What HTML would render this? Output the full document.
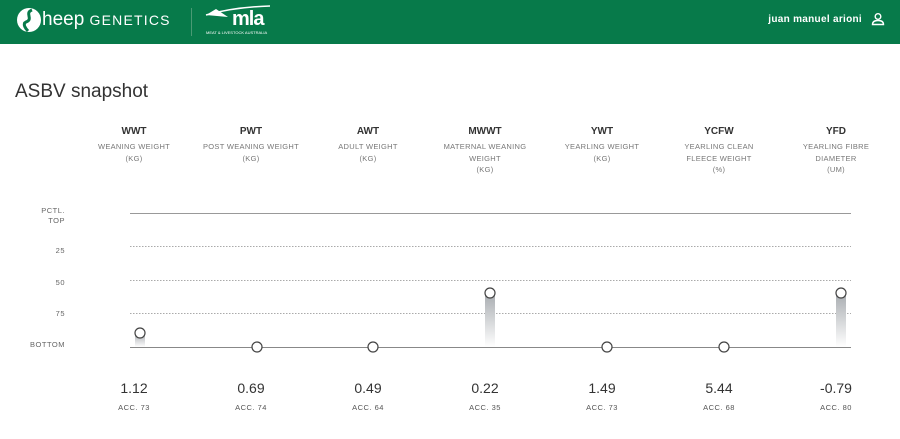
<!DOCTYPE html>
<html><head><style>
body{margin:0;width:900px;height:439px;background:#fff;font-family:"Liberation Sans",sans-serif;position:relative;overflow:hidden}
.hdr{position:absolute;left:0;top:0;width:900px;height:44px;background:#077a4a}
.t{position:absolute;text-align:center;width:116px;color:#333}
.ab{font-weight:bold;font-size:10px;top:126px}
.ds{font-size:7.5px;color:#777;top:141px;line-height:11.5px;letter-spacing:.3px}
.v{font-size:14px;top:380px;color:#333}
.a{font-size:7.5px;top:403px;color:#555;letter-spacing:.5px}
.y{position:absolute;right:835px;font-size:7.5px;color:#666;text-align:right;letter-spacing:.5px;line-height:10px}
</style></head><body>
<div class="hdr">
<svg width="30" height="30" style="position:absolute;left:14px;top:5px" viewBox="0 0 30 30"><circle cx="15" cy="15" r="12" fill="#fff"/><path d="M18 5 C10 8 20 14 12 17 C8 19 12 24 14 26" stroke="#077a4a" stroke-width="3" fill="none"/></svg>
<div style="position:absolute;left:42px;top:9px;color:#fff;font-size:19px;white-space:nowrap">heep <span style="font-size:14px;letter-spacing:1.2px">GENETICS</span></div>
<div style="position:absolute;left:191px;top:8px;width:1px;height:28px;background:#4a9a74"></div>
<svg width="70" height="32" style="position:absolute;left:204px;top:5px" viewBox="0 0 70 32"><path d="M2 10 L12 4 L24 12 Z" fill="#fff"/><path d="M2 10 Q30 2 66 1" stroke="#fff" stroke-width="1.5" fill="none"/></svg>
<div style="position:absolute;left:232px;top:8px;color:#fff;font-size:20px;font-weight:bold;letter-spacing:-1px">mla</div>
<div style="position:absolute;left:206px;top:30px;color:#fff;font-size:4px">MEAT &amp; LIVESTOCK AUSTRALIA</div>
<div style="position:absolute;right:38px;top:14px;color:#fff;font-size:10px;font-weight:bold;letter-spacing:.3px">juan manuel arioni</div>
<svg width="14" height="14" style="position:absolute;left:871px;top:12px" viewBox="0 0 14 14" fill="none" stroke="#fff" stroke-width="1.4"><circle cx="7" cy="4.5" r="2.8"/><path d="M1.5 12.5 Q1.5 8.5 7 8.5 Q12.5 8.5 12.5 12.5 Z"/></svg>
</div>
<div style="position:absolute;left:15px;top:81px;font-size:19px;color:#333">ASBV snapshot</div>

<div class="y" style="top:206px">PCTL.<br>TOP</div>
<div class="y" style="top:246px">25</div>
<div class="y" style="top:278px">50</div>
<div class="y" style="top:309px">75</div>
<div class="y" style="top:340px">BOTTOM</div>

<svg width="900" height="439" style="position:absolute;left:0;top:0">
<defs><linearGradient id="g" x1="0" y1="0" x2="0" y2="1"><stop offset="0" stop-color="#a8acb0"/><stop offset="1" stop-color="#fff"/></linearGradient></defs>
<line x1="130" y1="213.5" x2="851" y2="213.5" stroke="#999"/>
<line x1="130" y1="246.5" x2="851" y2="246.5" stroke="#aaa" stroke-dasharray="1.5 1.5"/>
<line x1="130" y1="280.5" x2="851" y2="280.5" stroke="#aaa" stroke-dasharray="1.5 1.5"/>
<line x1="130" y1="313.5" x2="851" y2="313.5" stroke="#aaa" stroke-dasharray="1.5 1.5"/>
<rect x="135" y="333" width="10" height="14" fill="url(#g)"/>
<rect x="485" y="293" width="10" height="54" fill="url(#g)"/>
<rect x="836" y="293" width="10" height="54" fill="url(#g)"/>
<line x1="130" y1="347.5" x2="851" y2="347.5" stroke="#888"/>
<g fill="#fff" stroke="#444" stroke-width="1.2">
<circle cx="140" cy="333" r="5"/><circle cx="257" cy="347" r="5"/><circle cx="373" cy="347" r="5"/><circle cx="490" cy="293" r="5"/><circle cx="607" cy="347" r="5"/><circle cx="724" cy="347" r="5"/><circle cx="841" cy="293" r="5"/>
</g></svg>

<div class="t ab" style="left:76px">WWT</div><div class="t ds" style="left:76px">WEANING WEIGHT<br>(KG)</div>
<div class="t ab" style="left:193px">PWT</div><div class="t ds" style="left:178px;width:146px">POST WEANING WEIGHT<br>(KG)</div>
<div class="t ab" style="left:310px">AWT</div><div class="t ds" style="left:310px">ADULT WEIGHT<br>(KG)</div>
<div class="t ab" style="left:427px">MWWT</div><div class="t ds" style="left:427px">MATERNAL WEANING<br>WEIGHT<br>(KG)</div>
<div class="t ab" style="left:544px">YWT</div><div class="t ds" style="left:544px">YEARLING WEIGHT<br>(KG)</div>
<div class="t ab" style="left:661px">YCFW</div><div class="t ds" style="left:661px">YEARLING CLEAN<br>FLEECE WEIGHT<br>(%)</div>
<div class="t ab" style="left:778px">YFD</div><div class="t ds" style="left:778px">YEARLING FIBRE<br>DIAMETER<br>(UM)</div>

<div class="t v" style="left:76px">1.12</div><div class="t a" style="left:76px">ACC. 73</div>
<div class="t v" style="left:193px">0.69</div><div class="t a" style="left:193px">ACC. 74</div>
<div class="t v" style="left:310px">0.49</div><div class="t a" style="left:310px">ACC. 64</div>
<div class="t v" style="left:427px">0.22</div><div class="t a" style="left:427px">ACC. 35</div>
<div class="t v" style="left:544px">1.49</div><div class="t a" style="left:544px">ACC. 73</div>
<div class="t v" style="left:661px">5.44</div><div class="t a" style="left:661px">ACC. 68</div>
<div class="t v" style="left:778px">-0.79</div><div class="t a" style="left:778px">ACC. 80</div>
</body></html>
